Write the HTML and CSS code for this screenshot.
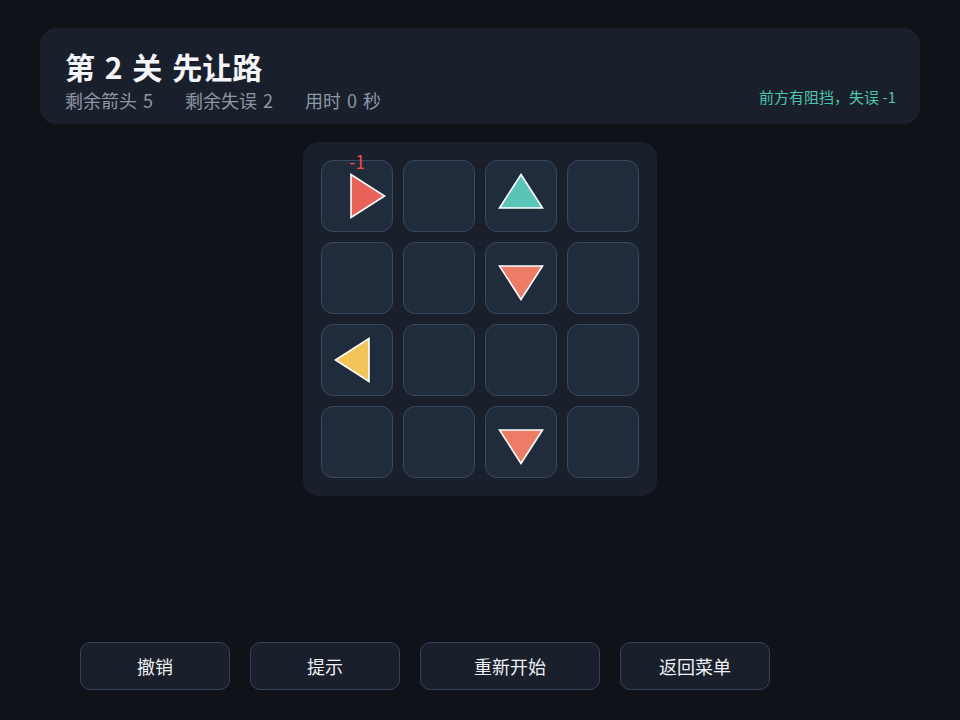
FILE: index.html
```html
<!DOCTYPE html>
<html lang="zh-CN">

<head>
    <meta charset="UTF-8">
    <meta name="viewport" content="width=device-width, initial-scale=1.0">
    <title>第 2 关 先让路</title>
    <link rel="stylesheet" href="styles.css">
</head>

<body>
    <div class="page">
        <div class="header">
            <div class="header-left">
                <h1 class="title">第 2 关 先让路</h1>
                <div class="stats">
                    <span>剩余箭头 5</span>
                    <span>剩余失误 2</span>
                    <span>用时 0 秒</span>
                </div>
            </div>
            <div class="message">前方有阻挡，失误 -1</div>
        </div>

        <div class="board">
            <div class="cell">
                <span class="penalty">-1</span>
                <svg class="arrow right bump" viewBox="0 0 46 46" width="46" height="46">
                    <polygon points="23,1.5 44.5,35 1.5,35" fill="#e8625a" />
                </svg>
            </div>
            <div class="cell"></div>
            <div class="cell">
                <svg class="arrow up" viewBox="0 0 46 46" width="46" height="46">
                    <polygon points="23,1.5 44.5,35 1.5,35" fill="#5bc4b9" />
                </svg>
            </div>
            <div class="cell"></div>

            <div class="cell"></div>
            <div class="cell"></div>
            <div class="cell">
                <svg class="arrow down" viewBox="0 0 46 46" width="46" height="46">
                    <polygon points="23,1.5 44.5,35 1.5,35" fill="#ec7c65" />
                </svg>
            </div>
            <div class="cell"></div>

            <div class="cell">
                <svg class="arrow left" viewBox="0 0 46 46" width="46" height="46">
                    <polygon points="23,1.5 44.5,35 1.5,35" fill="#f2c45a" />
                </svg>
            </div>
            <div class="cell"></div>
            <div class="cell"></div>
            <div class="cell"></div>

            <div class="cell"></div>
            <div class="cell"></div>
            <div class="cell">
                <svg class="arrow down" viewBox="0 0 46 46" width="46" height="46">
                    <polygon points="23,1.5 44.5,35 1.5,35" fill="#ec7c65" />
                </svg>
            </div>
            <div class="cell"></div>
        </div>

        <div class="actions">
            <button class="btn">撤销</button>
            <button class="btn">提示</button>
            <button class="btn wide">重新开始</button>
            <button class="btn">返回菜单</button>
        </div>
    </div>
</body>

</html>
```

FILE: styles.css
```css
body {
    margin: 0;
    background-color: #0f1218;
    font-family: "Noto Sans CJK SC", "Noto Sans", sans-serif;
    color: #e8ebf0;
}

.page {
    height: 720px;
    display: flex;
    flex-direction: column;
    box-sizing: border-box;
    padding: 28px 40px 30px;
}

.header {
    height: 96px;
    box-sizing: border-box;
    background-color: #1a202b;
    border-radius: 16px;
    padding: 14px 24px 12px 25px;
    display: flex;
    justify-content: space-between;
    align-items: flex-end;
}

.title {
    margin: 0;
    font-size: 30px;
    line-height: 44px;
    font-weight: 700;
    word-spacing: 3px;
    color: #f3f5f8;
}

.stats {
    display: flex;
    gap: 32px;
    font-size: 18px;
    line-height: 24px;
    word-spacing: 2px;
    color: #8d97a6;
}

.message {
    font-size: 15px;
    line-height: 24px;
    color: #4ec4ae;
    margin-bottom: 3px;
}

.board {
    align-self: center;
    margin-top: 18px;
    padding: 18px;
    background-color: #1a202b;
    border-radius: 16px;
    display: grid;
    grid-template-columns: repeat(4, 72px);
    grid-auto-rows: 72px;
    gap: 10px;
}

.cell {
    position: relative;
    box-sizing: border-box;
    background-color: #202b3b;
    border: 1px solid #394860;
    border-radius: 12px;
    display: flex;
    align-items: center;
    justify-content: center;
}

.arrow polygon {
    stroke: #ffffff;
    stroke-width: 1.6;
    stroke-linejoin: miter;
}

.arrow.right {
    transform: rotate(90deg);
}

.arrow.down {
    transform: rotate(180deg);
}

.arrow.left {
    transform: rotate(-90deg);
}

.arrow.right.bump {
    transform: translateX(6px) rotate(90deg);
}

.penalty {
    position: absolute;
    top: -10px;
    left: 27px;
    font-size: 18px;
    line-height: 20px;
    color: #e84c4b;
}

.actions {
    margin-top: auto;
    padding-left: 40px;
    display: flex;
    gap: 20px;
}

.btn {
    width: 150px;
    height: 48px;
    background-color: #19202b;
    border: 1px solid #344359;
    border-radius: 10px;
    color: #eef0f4;
    font-family: "Noto Sans CJK SC", "Noto Sans", sans-serif;
    font-size: 18px;
}

.btn.wide {
    width: 180px;
}
```
